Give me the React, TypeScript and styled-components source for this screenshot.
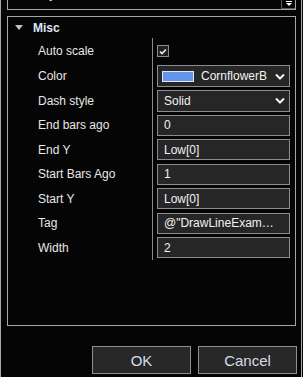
import React from 'react';
import styled, { createGlobalStyle } from 'styled-components';

const GlobalStyle = createGlobalStyle`
    html, body {
        margin: 0;
        padding: 0;
        background: #050505;
    }
    * {
        box-sizing: border-box;
    }
`;

const Window = styled.div`
    width: 302px;
    height: 377px;
    padding: 0 5px 0 6px;
    border-left: 1px solid #a8a8a8;
    border-right: 1px solid #a8a8a8;
    background: #050505;
    display: flex;
    flex-direction: column;
    font-family: "Liberation Sans", Arial, sans-serif;
    font-size: 12px;
    color: #e6e6e6;
    overflow: hidden;
`;

const TopPanel = styled.div`
    height: 10px;
    border: 1px solid #a5a5a5;
    border-top: none;
    display: flex;
    align-items: flex-start;
    overflow: hidden;
`;

const TopRow = styled.div`
    flex: 1;
    height: 24px;
    margin-top: -18px;
    padding-left: 30px;
    display: flex;
    align-items: center;
`;

const MiniDrop = styled.div`
    width: 14px;
    height: 9px;
    border-left: 1px solid #5a5a5a;
    border-bottom: 1px solid #5a5a5a;
    display: flex;
    align-items: center;
    justify-content: center;
`;

const MiscPanel = styled.div`
    margin-top: 6px;
    height: 310px;
    border: 1px solid #a5a5a5;
    display: flex;
    flex-direction: column;
`;

const Header = styled.div`
    height: 21px;
    padding-left: 7px;
    display: flex;
    align-items: center;
    gap: 10px;
    font-weight: bold;
    color: #dfe6f5;
`;

const Row = styled.div<{ h: number }>`
    height: ${p => p.h}px;
    display: flex;
    padding-right: 5px;
`;

const Label = styled.div`
    width: 144px;
    padding-left: 30px;
    display: flex;
    align-items: center;
    white-space: nowrap;
    color: #e8e8e8;
`;

const Value = styled.div`
    flex: 1;
    min-width: 0;
    border-left: 1px solid #8a8a8a;
    padding-left: 4px;
    display: flex;
    align-items: center;
`;

const Box = styled.div`
    width: 100%;
    height: 21px;
    border: 1px solid #8c8c8c;
    background: #262626;
    padding: 0 11px 0 6px;
    display: flex;
    align-items: center;
    color: #f2f2f2;
    white-space: nowrap;
    overflow: hidden;
`;

const BoxText = styled.span<{ clip?: boolean }>`
    flex: 1;
    min-width: 0;
    overflow: hidden;
    text-overflow: ${p => (p.clip ? 'clip' : 'ellipsis')};
`;

const DropBox = styled(Box)<{ pad: number }>`
    height: 22px;
    padding: 0 4px 0 ${p => p.pad}px;
`;

const Swatch = styled.span`
    width: 30px;
    height: 9px;
    flex-shrink: 0;
    background: #6495ed;
    outline: 1px solid #dfe7f7;
    margin-right: 8px;
`;

const Chevron = styled.svg`
    width: 10px;
    height: 7px;
    flex-shrink: 0;
    margin-left: 8px;
`;

const Check = styled.div`
    width: 12px;
    height: 12px;
    border: 1px solid #8c8c8c;
    background: #202020;
    display: flex;
    align-items: center;
    justify-content: center;
`;

const Footer = styled.div`
    margin-top: 20px;
    margin-right: -1px;
    display: flex;
    justify-content: flex-end;
    gap: 7px;
`;

const Button = styled.button`
    width: 99px;
    height: 28px;
    border: 1px solid #909090;
    background: #282828;
    color: #d6dcea;
    font-family: "Liberation Sans", Arial, sans-serif;
    font-size: 15px;
    padding: 0;
`;

const ChevronIcon = () => (
    <Chevron viewBox="0 0 10 7">
        <polyline points="1,1.5 5,5.5 9,1.5" fill="none" stroke="#f2f2f2" strokeWidth="2" />
    </Chevron>
);

const TextRow = ({ label, value, h = 24.5 }: { label: string; value: string; h?: number }) => (
    <Row h={h}>
        <Label>{label}</Label>
        <Value>
            <Box>
                <BoxText>{value}</BoxText>
            </Box>
        </Value>
    </Row>
);

export default function App() {
    return (
        <>
            <GlobalStyle />
            <Window>
                <TopPanel>
                    <TopRow>Style</TopRow>
                    <MiniDrop>
                        <svg width="8" height="6" viewBox="0 0 8 6">
                            <rect x="1" y="0" width="6" height="1" fill="#ffffff" />
                            <polygon points="1,2 7,2 4,5" fill="#ffffff" />
                        </svg>
                    </MiniDrop>
                </TopPanel>

                <MiscPanel>
                    <Header>
                        <svg width="8" height="5" viewBox="0 0 8 5">
                            <polygon points="0,0 8,0 4,5" fill="#c4c4c4" />
                        </svg>
                        Misc
                    </Header>

                    <Row h={26}>
                        <Label>Auto scale</Label>
                        <Value>
                            <Check>
                                <svg width="8" height="7" viewBox="0 0 8 7">
                                    <polyline points="1,3.5 3,5.5 7,1.5" fill="none" stroke="#f0f0f0" strokeWidth="1.6" />
                                </svg>
                            </Check>
                        </Value>
                    </Row>

                    <Row h={24.5}>
                        <Label>Color</Label>
                        <Value>
                            <DropBox pad={5}>
                                <Swatch />
                                <BoxText clip>CornflowerBlue</BoxText>
                                <ChevronIcon />
                            </DropBox>
                        </Value>
                    </Row>

                    <Row h={24.5}>
                        <Label>Dash style</Label>
                        <Value>
                            <DropBox pad={6}>
                                <BoxText>Solid</BoxText>
                                <ChevronIcon />
                            </DropBox>
                        </Value>
                    </Row>

                    <TextRow label="End bars ago" value="0" />
                    <TextRow label="End Y" value="Low[0]" />
                    <TextRow label="Start Bars Ago" value="1" />
                    <TextRow label="Start Y" value="Low[0]" />
                    <TextRow label="Tag" value={'@"DrawLineExample"'} />
                    <TextRow label="Width" value="2" />
                </MiscPanel>

                <Footer>
                    <Button>OK</Button>
                    <Button>Cancel</Button>
                </Footer>
            </Window>
        </>
    );
}
